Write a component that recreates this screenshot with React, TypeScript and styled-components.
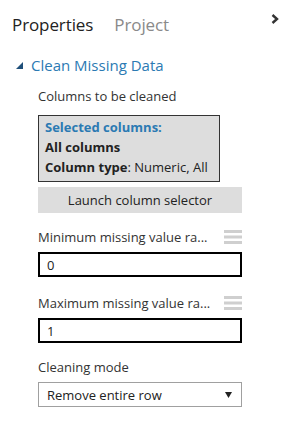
import React from 'react';
import styled, { createGlobalStyle } from 'styled-components';

const GlobalStyle = createGlobalStyle`
  html, body {
    margin: 0;
    padding: 0;
    background: #fff;
  }
  body {
    font-family: "Open Sans", "Noto Sans", sans-serif;
    color: #222;
  }
`;

const Panel = styled.div`
  width: 287px;
  height: 428px;
  box-sizing: border-box;
  background: #fff;
  overflow: hidden;
`;

const TabBar = styled.div`
  display: flex;
  align-items: center;
  height: 48px;
  padding: 0 8px 0 12px;
`;

const Tab = styled.div<{ $active?: boolean }>`
  font-size: 17px;
  margin-right: 21px;
  color: ${(p) => (p.$active ? '#222' : '#8a8a8a')};
  letter-spacing: -0.1px;
`;

const Collapse = styled.div`
  margin-left: auto;
  align-self: flex-start;
  margin-top: 14px;
  display: flex;
`;

const SectionHeader = styled.div`
  display: flex;
  align-items: center;
  gap: 8px;
  padding-left: 16px;
  margin-top: 7px;
  height: 20px;
  color: #2b7ab3;
  font-size: 15px;
  font-weight: 500;
`;

const Body = styled.div`
  padding: 0 45px 0 38px;
  display: flex;
  flex-direction: column;
`;

const FieldLabel = styled.div<{ $top?: number }>`
  display: flex;
  align-items: center;
  justify-content: space-between;
  font-size: 13px;
  color: #333;
  margin-top: ${(p) => p.$top ?? 0}px;
  height: 18px;
`;

const SelectedBox = styled.div`
  margin-top: 10px;
  width: 182px;
  box-sizing: border-box;
  background: #ddd;
  border: 1px solid #333;
  padding: 1px 6px 4px;
  font-size: 13px;
  line-height: 20px;
  color: #222;
`;

const BoxTitle = styled.div`
  color: #2b7ab3;
  font-weight: 700;
`;

const Strong = styled.span`
  font-weight: 700;
`;

const LaunchButton = styled.button`
  margin-top: 5px;
  height: 26px;
  border: none;
  background: #ddd;
  font-family: inherit;
  font-size: 13px;
  color: #222;
  padding: 0;
`;

const TextInput = styled.div`
  margin-top: 6px;
  height: 25px;
  box-sizing: border-box;
  border: 2px solid #000;
  padding-left: 7px;
  display: flex;
  align-items: center;
  font-size: 13px;
  color: #222;
`;

const Select = styled.div`
  margin-top: 6px;
  height: 25px;
  box-sizing: border-box;
  border: 1px solid #a0a0a0;
  padding: 0 9px 0 8px;
  display: flex;
  align-items: center;
  justify-content: space-between;
  font-size: 13px;
  color: #222;
`;

const Hamburger = () => (
  <svg width="18" height="14" viewBox="0 0 18 14">
    <rect x="0" y="0" width="18" height="3" fill="#cfcfcf" />
    <rect x="0" y="5.5" width="18" height="3" fill="#cfcfcf" />
    <rect x="0" y="11" width="18" height="3" fill="#cfcfcf" />
  </svg>
);

export default function App() {
  return (
    <Panel>
      <GlobalStyle />
      <TabBar>
        <Tab $active>Properties</Tab>
        <Tab>Project</Tab>
        <Collapse>
          <svg width="8" height="10" viewBox="0 0 8 10">
            <path d="M1.5 1 L6 5 L1.5 9" fill="none" stroke="#333" strokeWidth="2.4" />
          </svg>
        </Collapse>
      </TabBar>
      <SectionHeader>
        <svg width="7" height="7" viewBox="0 0 7 7">
          <path d="M7 0 L7 7 L0 7 Z" fill="#1f4f7a" />
        </svg>
        Clean Missing Data
      </SectionHeader>
      <Body>
        <FieldLabel $top={12}>Columns to be cleaned</FieldLabel>
        <SelectedBox>
          <BoxTitle>Selected columns:</BoxTitle>
          <Strong>All columns</Strong>
          <div>
            <Strong>Column type</Strong>: Numeric, All
          </div>
        </SelectedBox>
        <LaunchButton>Launch column selector</LaunchButton>
        <FieldLabel $top={15}>
          Minimum missing value ra...
          <Hamburger />
        </FieldLabel>
        <TextInput>0</TextInput>
        <FieldLabel $top={17}>
          Maximum missing value ra...
          <Hamburger />
        </FieldLabel>
        <TextInput>1</TextInput>
        <FieldLabel $top={15}>Cleaning mode</FieldLabel>
        <Select>
          Remove entire row
          <svg width="7" height="6" viewBox="0 0 7 6">
            <path d="M0 0 L7 0 L3.5 6 Z" fill="#222" />
          </svg>
        </Select>
      </Body>
    </Panel>
  );
}
